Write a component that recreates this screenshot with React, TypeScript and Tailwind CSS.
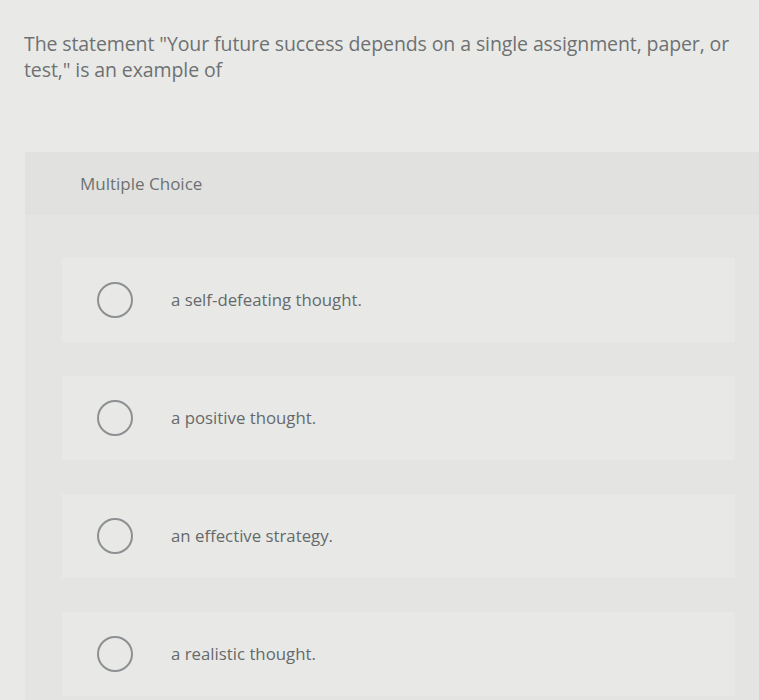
const choices = [
  "a self-defeating thought.",
  "a positive thought.",
  "an effective strategy.",
  "a realistic thought.",
];

export default function App() {
  return (
    <div
      className="h-[700px] w-[759px] overflow-hidden bg-[#e9eae7] text-[#6e7173]"
      style={{ fontFamily: "'Open Sans', Lato, sans-serif" }}
    >
      <p className="pl-6 pr-5 pt-[31px] text-[19.5px] leading-[26px] tracking-[-0.1px]">
        The statement "Your future success depends on a single assignment, paper, or test," is an
        example of
      </p>

      <div className="ml-[25px] mt-[69px] bg-[#e1e2df]">
        <div className="flex h-[63px] items-center pl-[55px] text-[17px]">Multiple Choice</div>
        <div className="flex flex-col gap-[34px] bg-[#e4e5e2] pb-10 pl-[37px] pr-6 pt-[43px]">
          {choices.map((c) => (
            <div key={c} className="flex h-[84px] items-center bg-[#e8e9e6] pl-[35px]">
              <span className="h-[36px] w-[36px] shrink-0 rounded-full border-2 border-[#8d9092]" />
              <span className="ml-[38px] text-[16.8px] text-[#66696b]">{c}</span>
            </div>
          ))}
        </div>
      </div>
    </div>
  );
}
